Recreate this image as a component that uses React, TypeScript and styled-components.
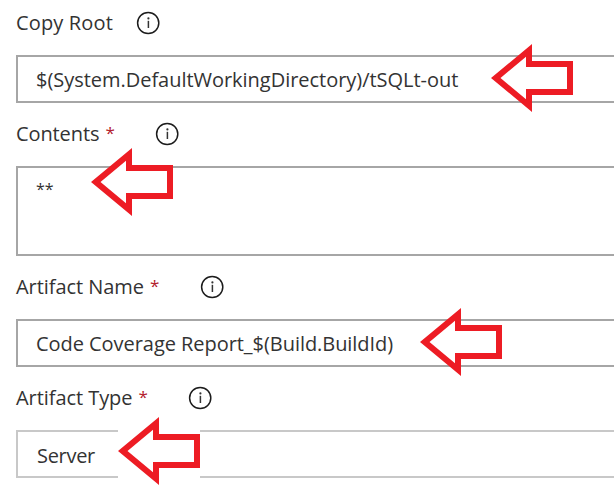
import React from 'react';
import styled, { createGlobalStyle } from 'styled-components';

const GlobalStyle = createGlobalStyle`
  body {
    margin: 0;
    background: #fff;
    overflow: hidden;
  }
`;

const Form = styled.form`
  display: flex;
  flex-direction: column;
  height: 488px;
  padding-left: 16px;
  overflow: hidden;
  color: #333;
  font: 20px/28px 'Open Sans', 'Noto Sans', sans-serif;
`;

const LabelRow = styled.div<{ $first?: boolean }>`
  display: flex;
  align-items: flex-end;
  box-sizing: border-box;
  height: ${(p) => (p.$first ? 55 : 63)}px;
  padding-bottom: 18px;
`;

const LabelArea = styled.div<{ $width: number }>`
  display: flex;
  width: ${(p) => p.$width}px;
  white-space: pre;
`;

const Copy = styled.span<{ $spacing: number; $small?: boolean }>`
  font-size: ${(p) => (p.$small ? 16 : 20)}px;
  letter-spacing: ${(p) => p.$spacing}px;
  white-space: pre;
`;

const Required = styled.span`
  margin-left: 6px;
  color: #b3202c;
  font-size: 17px;
  line-height: 25px;
`;

const InfoSvg = styled.svg`
  display: block;
  flex: none;
  width: 24px;
  height: 24px;
  margin-bottom: 2px;
`;

const Field = styled.div<{ $height: number; $light?: boolean; $indent?: number; $top?: number }>`
  position: relative;
  box-sizing: border-box;
  height: ${(p) => p.$height}px;
  padding: ${(p) => p.$top ?? 9}px 0 0 ${(p) => p.$indent ?? 18}px;
  border: 2px solid ${(p) => (p.$light ? '#c8c8c8' : '#a6a6a6')};
  border-right: 0;
`;

const ArrowSvg = styled.svg<{ $left: number; $top: number; $opaque?: boolean }>`
  position: absolute;
  left: ${(p) => p.$left}px;
  top: ${(p) => p.$top}px;
  width: 82px;
  height: 68px;
  background: ${(p) => (p.$opaque ? '#fff' : 'transparent')};
`;

const Info = () => (
  <InfoSvg viewBox="0 0 24 24" fill="none">
    <circle cx="12.2" cy="12" r="10.6" stroke="#1c1c1c" strokeWidth="1.5" />
    <path d="M12.4 9.8V17" stroke="#333" strokeWidth="1.5" />
    <circle cx="12.4" cy="7.4" r="1.1" fill="#333" />
  </InfoSvg>
);

const Arrow = (props: { left: number; top: number; opaque?: boolean }) => (
  <ArrowSvg viewBox="0 0 82 68" $left={props.left} $top={props.top} $opaque={props.opaque}>
    <path d="M0 34 41 0V17H82V51H41V68Z" fill="#ed1c24" />
    <path d="M9.5 34 35 12.7V23H76V45H35V55.3Z" fill="#fff" />
  </ArrowSvg>
);

type LabelProps = { text: string; width: number; spacing: number; required?: boolean; first?: boolean };

const Label = ({ text, width, spacing, required, first }: LabelProps) => (
  <LabelRow $first={first}>
    <LabelArea $width={width}>
      <Copy $spacing={spacing}>{text}</Copy>
      {required && <Required>*</Required>}
    </LabelArea>
    <Info />
  </LabelRow>
);

export default function App() {
  return (
    <>
      <GlobalStyle />
      <Form>
        <Label first text="Copy Root" width={120} spacing={0.15} />
        <Field $height={48}>
          <Copy $spacing={-0.03}>$(System.DefaultWorkingDirectory)/tSQLt-out</Copy>
          <Arrow left={473} top={-13} />
        </Field>
        <Label text="Contents" width={139} spacing={-0.1} required />
        <Field $height={90} $top={6}>
          <Copy $small $spacing={0}>**</Copy>
          <Arrow left={73} top={-20} />
        </Field>
        <Label text="Artifact Name" width={184} spacing={-0.06} required />
        <Field $height={48}>
          <Copy $spacing={-0.05}>Code Coverage Report_$(Build.BuildId)</Copy>
          <Arrow left={402} top={-13} />
        </Field>
        <Label text="Artifact Type" width={172} spacing={-0.06} required />
        <Field $height={48} $light $indent={19} $top={10}>
          <Copy $spacing={-0.3}>Server</Copy>
          <Arrow left={100} top={-15} opaque />
        </Field>
      </Form>
    </>
  );
}
